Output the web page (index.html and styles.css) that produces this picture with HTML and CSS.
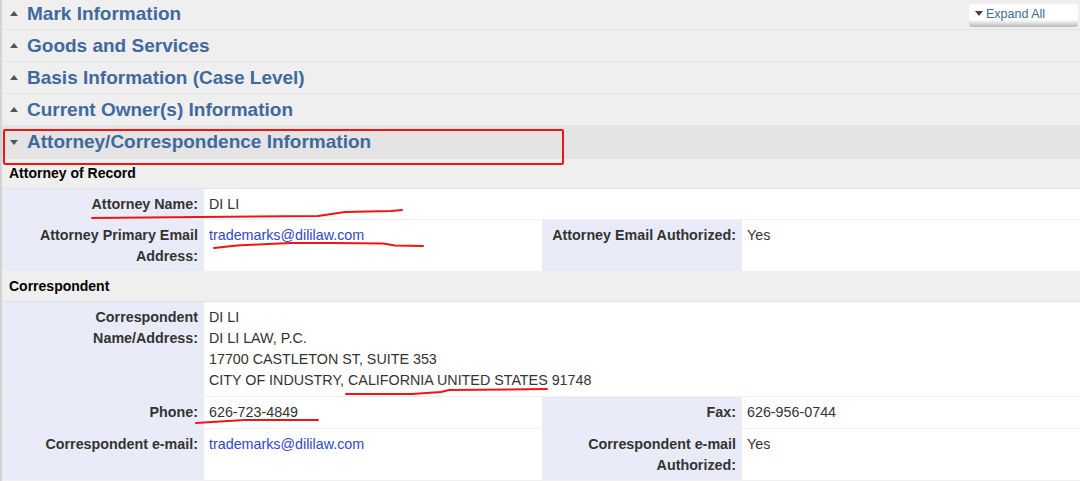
FILE: index.html
```html
<!DOCTYPE html>
<html lang="en">

<head>
    <meta charset="UTF-8">
    <meta name="viewport" content="width=device-width, initial-scale=1.0">
    <title>Attorney/Correspondence Information</title>
    <link rel="stylesheet" href="styles.css">
</head>

<body>
    <div class="page">
        <div class="sections">
            <div class="sec-head">
                <span class="tri up"></span>Mark Information
                <button class="expand-all"><span class="tri-sm"></span>Expand All</button>
            </div>
            <div class="sec-head"><span class="tri up"></span>Goods and Services</div>
            <div class="sec-head"><span class="tri up"></span>Basis Information (Case Level)</div>
            <div class="sec-head"><span class="tri up"></span>Current Owner(s) Information</div>
            <div class="sec-head open"><span class="tri down"></span>Attorney/Correspondence Information</div>

            <div class="sub-head">Attorney of Record</div>
            <div class="grid">
                <div class="lbl">Attorney Name:</div>
                <div class="val wide">DI LI</div>

                <div class="lbl">Attorney Primary Email<br>Address:</div>
                <div class="val"><a href="#">trademarks@dililaw.com</a></div>
                <div class="lbl">Attorney Email Authorized:</div>
                <div class="val">Yes</div>
            </div>

            <div class="sub-head">Correspondent</div>
            <div class="grid">
                <div class="lbl tall">Correspondent<br>Name/Address:</div>
                <div class="val wide tall">DI LI<br>DI LI LAW, P.C.<br>17700 CASTLETON ST, SUITE 353<br>CITY OF INDUSTRY, CALIFORNIA UNITED STATES 91748</div>

                <div class="lbl tall">Phone:</div>
                <div class="val tall">626-723-4849</div>
                <div class="lbl tall">Fax:</div>
                <div class="val tall">626-956-0744</div>

                <div class="lbl">Correspondent e-mail:</div>
                <div class="val"><a href="#">trademarks@dililaw.com</a></div>
                <div class="lbl">Correspondent e-mail<br>Authorized:</div>
                <div class="val">Yes</div>
            </div>
        </div>

        <!-- red review marks drawn over the page -->
        <svg class="marks" width="1080" height="481" viewBox="0 0 1080 481">
            <rect x="4" y="130" width="559" height="34" rx="1" />
            <path d="M92 218 L200 217 L318 216 L345 212 L391 211 L402 210" />
            <path d="M214 248 L237 245.5 L268 244 L291 243 L333 243 L383 243.5 L395 245.5 L423 246" />
            <path d="M346 394 L412 394 L441 392 L449 390 L547 389" />
            <path d="M196 423 L220 421.5 L245 420 L318 420" />
        </svg>
    </div>
</body>

</html>
```

FILE: styles.css
```css
body {
    margin: 0;
    padding: 0;
    background-color: #fff;
    font-family: 'Liberation Sans', Arial, sans-serif;
    font-size: 14px;
    color: #333;
    overflow: hidden;
}

.page {
    position: relative;
    width: 1080px;
    height: 481px;
    overflow: hidden;
}

.sections {
    margin-top: -2px;
    border-left: 2px solid #d3d3d3;
    min-height: 490px;
}

.sec-head {
    display: flex;
    align-items: center;
    height: 31px;
    padding-left: 8px;
    background-color: #efefef;
    border-bottom: 1px solid #e3e3e3;
    font-size: 19px;
    font-weight: bold;
    color: #41699d;
}

.sec-head.open {
    height: 32px;
    background-color: #e4e4e4;
    border-bottom-color: #e4e4e4;
}

.tri {
    width: 0;
    height: 0;
    margin-right: 9px;
    border-left: 4px solid transparent;
    border-right: 4px solid transparent;
}

.tri.up {
    border-bottom: 5px solid #555;
}

.tri.down {
    border-top: 5px solid #555;
}

.expand-all {
    display: flex;
    align-items: center;
    margin-left: auto;
    margin-right: 2px;
    margin-top: 3px;
    width: 109px;
    height: 23px;
    padding: 0 0 3px 6px;
    border: none;
    border-radius: 3px;
    background: linear-gradient(#fff 0%, #fff 68%, #e2e2e2 82%, #b8b8b8 100%);
    font-family: 'Liberation Sans', Arial, sans-serif;
    font-size: 12.5px;
    font-weight: normal;
    color: #3a6b98;
}

.tri-sm {
    width: 0;
    height: 0;
    margin-right: 3px;
    border-left: 4px solid transparent;
    border-right: 4px solid transparent;
    border-top: 5px solid #444;
}

.sub-head {
    height: 29px;
    line-height: 29px;
    padding-left: 7px;
    background-color: #efefef;
    border-bottom: 1px solid #e2e2e2;
    font-weight: bold;
    color: #000;
}

.grid {
    display: grid;
    grid-template-columns: 202px 338px 200px 1fr;
}

.lbl,
.val {
    font-size: 14.3px;
    line-height: 21px;
    padding-top: 5px;
    padding-bottom: 4px;
    border-bottom: 1px solid #f0f0f0;
}

.lbl.tall,
.val.tall {
    padding-bottom: 5px;
}

.lbl {
    background-color: #e9ecf8;
    text-align: right;
    padding-right: 6px;
    font-weight: bold;
    color: #333;
}

.val {
    background-color: #fff;
    padding-left: 5px;
    color: #333;
}

.val.wide {
    grid-column: span 3;
}

.val a {
    color: #2f47c8;
    text-decoration: none;
}

.marks {
    position: absolute;
    top: 0;
    left: 0;
    pointer-events: none;
}

.marks rect,
.marks path {
    fill: none;
    stroke: #f01515;
    stroke-width: 2;
    stroke-linecap: round;
    stroke-linejoin: round;
}
```
